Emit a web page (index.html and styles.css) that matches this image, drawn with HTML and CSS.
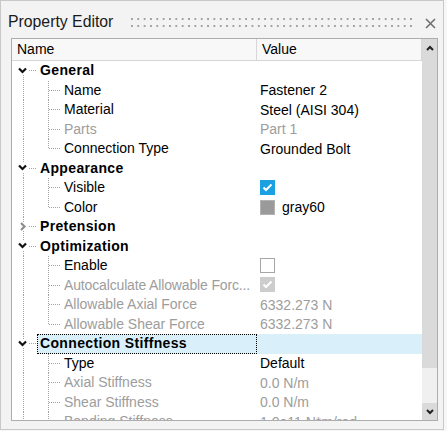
FILE: index.html
```html
<!DOCTYPE html>
<html>
<head>
<meta charset="utf-8">
<title>Property Editor</title>
<link rel="stylesheet" href="styles.css">
</head>
<body>
<div class="panel">
  <div class="titlebar">
    <span class="title">Property Editor</span>
    <span class="grip"></span>
    <svg class="close" width="11" height="11" viewBox="0 0 11 11"><path d="M1 1 L10 10 M10 1 L1 10" stroke="#707070" stroke-width="1.6" fill="none"/></svg>
  </div>
  <div class="tree">
    <div class="content">
      <div class="header">
        <div class="hname">Name</div>
        <div class="hvalue">Value</div>
      </div>
      <div class="rows">
        <div class="row cat first">
          <div class="name"><span class="gutter"><svg class="chev" width="9" height="9" viewBox="0 0 9 9"><rect width="9" height="9" fill="#fff"/><path d="M1 2.5 L4.5 6 L8 2.5" stroke="#111" stroke-width="2.2" fill="none"/></svg></span><span class="label">General</span></div>
          <div class="value"></div>
        </div>
        <div class="row child">
          <div class="name"><span class="gutter"></span><span class="label">Name</span></div>
          <div class="value">Fastener 2</div>
        </div>
        <div class="row child">
          <div class="name"><span class="gutter"></span><span class="label">Material</span></div>
          <div class="value">Steel (AISI 304)</div>
        </div>
        <div class="row child dis">
          <div class="name"><span class="gutter"></span><span class="label">Parts</span></div>
          <div class="value">Part 1</div>
        </div>
        <div class="row child last">
          <div class="name"><span class="gutter"></span><span class="label">Connection Type</span></div>
          <div class="value">Grounded Bolt</div>
        </div>
        <div class="row cat">
          <div class="name"><span class="gutter"><svg class="chev" width="9" height="9" viewBox="0 0 9 9"><rect width="9" height="9" fill="#fff"/><path d="M1 2.5 L4.5 6 L8 2.5" stroke="#111" stroke-width="2.2" fill="none"/></svg></span><span class="label">Appearance</span></div>
          <div class="value"></div>
        </div>
        <div class="row child">
          <div class="name"><span class="gutter"></span><span class="label">Visible</span></div>
          <div class="value"><span class="cb on"><svg width="15" height="15" viewBox="0 0 15 15"><path d="M3.5 7.5 L6 10 L11.5 4.5" stroke="#fff" stroke-width="2" fill="none"/></svg></span></div>
        </div>
        <div class="row child last">
          <div class="name"><span class="gutter"></span><span class="label">Color</span></div>
          <div class="value"><span class="swatch"></span><span>gray60</span></div>
        </div>
        <div class="row cat">
          <div class="name"><span class="gutter"><svg class="chev" width="9" height="9" viewBox="0 0 9 9"><rect width="9" height="9" fill="#fff"/><path d="M3 1 L6.5 4.5 L3 8" stroke="#8e8e8e" stroke-width="2.2" fill="none"/></svg></span><span class="label">Pretension</span></div>
          <div class="value"></div>
        </div>
        <div class="row cat">
          <div class="name"><span class="gutter"><svg class="chev" width="9" height="9" viewBox="0 0 9 9"><rect width="9" height="9" fill="#fff"/><path d="M1 2.5 L4.5 6 L8 2.5" stroke="#111" stroke-width="2.2" fill="none"/></svg></span><span class="label">Optimization</span></div>
          <div class="value"></div>
        </div>
        <div class="row child">
          <div class="name"><span class="gutter"></span><span class="label">Enable</span></div>
          <div class="value"><span class="cb off"></span></div>
        </div>
        <div class="row child dis">
          <div class="name"><span class="gutter"></span><span class="label tight">Autocalculate Allowable Forc...</span></div>
          <div class="value"><span class="cb disabled"><svg width="15" height="15" viewBox="0 0 15 15"><path d="M3.5 7.5 L6 10 L11.5 4.5" stroke="#fff" stroke-width="2" fill="none"/></svg></span></div>
        </div>
        <div class="row child dis">
          <div class="name"><span class="gutter"></span><span class="label">Allowable Axial Force</span></div>
          <div class="value">6332.273 N</div>
        </div>
        <div class="row child dis last">
          <div class="name"><span class="gutter"></span><span class="label">Allowable Shear Force</span></div>
          <div class="value">6332.273 N</div>
        </div>
        <div class="row cat selected">
          <div class="name"><span class="gutter"><svg class="chev" width="9" height="9" viewBox="0 0 9 9"><rect width="9" height="9" fill="#fff"/><path d="M1 2.5 L4.5 6 L8 2.5" stroke="#111" stroke-width="2.2" fill="none"/></svg></span><span class="label">Connection Stiffness</span></div>
          <div class="value"></div>
        </div>
        <div class="row child">
          <div class="name"><span class="gutter"></span><span class="label">Type</span></div>
          <div class="value">Default</div>
        </div>
        <div class="row child dis">
          <div class="name"><span class="gutter"></span><span class="label">Axial Stiffness</span></div>
          <div class="value">0.0 N/m</div>
        </div>
        <div class="row child dis">
          <div class="name"><span class="gutter"></span><span class="label">Shear Stiffness</span></div>
          <div class="value">0.0 N/m</div>
        </div>
        <div class="row child dis">
          <div class="name"><span class="gutter"></span><span class="label">Bending Stiffness</span></div>
          <div class="value">1.0e11 N*m/rad</div>
        </div>
      </div>
    </div>
    <div class="scrollbar">
      <div class="sb-btn"><svg width="8" height="6" viewBox="0 0 8 6"><path d="M1 5 L4 2 L7 5" stroke="#222" stroke-width="2" fill="none"/></svg></div>
      <div class="sb-thumb"></div>
      <div class="sb-track"></div>
      <div class="sb-btn"><svg width="8" height="6" viewBox="0 0 8 6"><path d="M1 1 L4 4 L7 1" stroke="#222" stroke-width="2" fill="none"/></svg></div>
    </div>
  </div>
</div>
</body>
</html>
```

FILE: styles.css
```css
* { box-sizing: border-box; }
html, body { margin: 0; padding: 0; }
body {
  width: 447px;
  height: 431px;
  overflow: hidden;
  background: #f7f7f7;
  font-family: "Liberation Sans", Arial, sans-serif;
  color: #000;
  --vdot: repeating-linear-gradient(to bottom, #a3a3a3 0 1px, transparent 1px 2px);
  --hdot: repeating-linear-gradient(to right, #a3a3a3 0 1px, transparent 1px 2px);
}
.panel {
  width: 444px;
  height: 430px;
  border: 1px solid #c8c8c8;
  background: #f3f3f3;
  display: flex;
  flex-direction: column;
}
.titlebar {
  height: 37px;
  flex: none;
  display: flex;
  align-items: flex-start;
  padding-left: 7px;
  padding-right: 7px;
}
.title {
  font-size: 15.8px;
  line-height: 18px;
  margin-top: 12px;
  color: #1a1a1a;
  white-space: nowrap;
}
.grip {
  margin-left: 18px;
  margin-top: 17px;
  width: 281px;
  height: 9px;
  background-image: radial-gradient(circle at 1px 1px, #a0a0a0 0.9px, transparent 1.3px);
  background-size: 6.35px 7px;
}
.close {
  margin-left: auto;
  margin-top: 17px;
}
.tree {
  margin-left: 10px;
  width: 427px;
  height: 383px;
  border: 1px solid #adadad;
  background: #fff;
  display: grid;
  grid-template-columns: 410px 15px;
  overflow: hidden;
}
.content { overflow: hidden; }
.header {
  height: 22px;
  display: grid;
  grid-template-columns: 245px 1fr;
  background: #f8f8f8;
  border-bottom: 1px solid #d6d6d6;
  border-right: 1px solid #d6d6d6;
  font-size: 14px;
  line-height: 21px;
}
.hname { padding-left: 5px; border-right: 1px solid #d6d6d6; }
.hvalue { padding-left: 5px; }
.row {
  height: 20px;
  display: grid;
  grid-template-columns: 245px 1fr;
  font-size: 14px;
  white-space: nowrap;
}
.row:nth-child(even) { height: 19px; }
.name {
  display: flex;
  height: 100%;
  min-width: 0;
}
.gutter {
  flex: none;
  height: 100%;
  background-repeat: no-repeat;
}
.cat .gutter {
  width: 25px;
  display: flex;
  align-items: center;
  padding-left: 6px;
  padding-bottom: 2px;
  background-image: var(--vdot), var(--hdot);
  background-position: 11px 0, 17px 9px;
  background-size: 1px 100%, 10px 1px;
}
.cat.first .gutter { background-position: 11px 10px, 17px 9px; }
.chev { display: block; }
.child .gutter {
  width: 49px;
  background-image: var(--vdot), var(--vdot), var(--hdot);
  background-position: 11px 0, 36px 0, 37px 9px;
  background-size: 1px 100%, 1px 100%, 13px 1px;
}
.child.last .gutter { background-size: 1px 100%, 1px 10px, 13px 1px; }
.label {
  flex: 1;
  min-width: 0;
  display: block;
  border: 1px dotted transparent;
  padding: 0 0 0 2px;
  line-height: 17px;
  overflow: hidden;
}
.label.tight { letter-spacing: -0.15px; }
.cat .label { font-weight: bold; letter-spacing: 0.35px; }
.value {
  display: flex;
  align-items: center;
  gap: 7px;
  padding-left: 3px;
  line-height: 17px;
}
.dis .label, .dis .value { color: #9d9d9d; }
.selected .label {
  background: #d9f0fa;
  border-color: #000;
}
.selected .value { background: #d9f0fa; }
.cb {
  width: 15px;
  height: 15px;
  display: block;
  margin-top: -2px;
}
.cb svg { display: block; }
.cb.on { background: #1ba1e2; }
.cb.off { background: #fff; border: 1px solid #a6a6a6; }
.cb.disabled { background: #cdcdcd; }
.swatch {
  width: 15px;
  height: 15px;
  display: block;
  background: #9a9a9a;
  border: 1px solid #b2b2b2;
}
.scrollbar {
  display: flex;
  flex-direction: column;
  height: 381px;
}
.sb-btn {
  height: 17px;
  flex: none;
  background: #dadada;
  display: flex;
  align-items: center;
  justify-content: center;
}
.sb-btn svg { display: block; }
.sb-thumb { height: 312px; flex: none; background: #dadada; }
.sb-track { flex: 1; background: #f0f0f0; }
```
